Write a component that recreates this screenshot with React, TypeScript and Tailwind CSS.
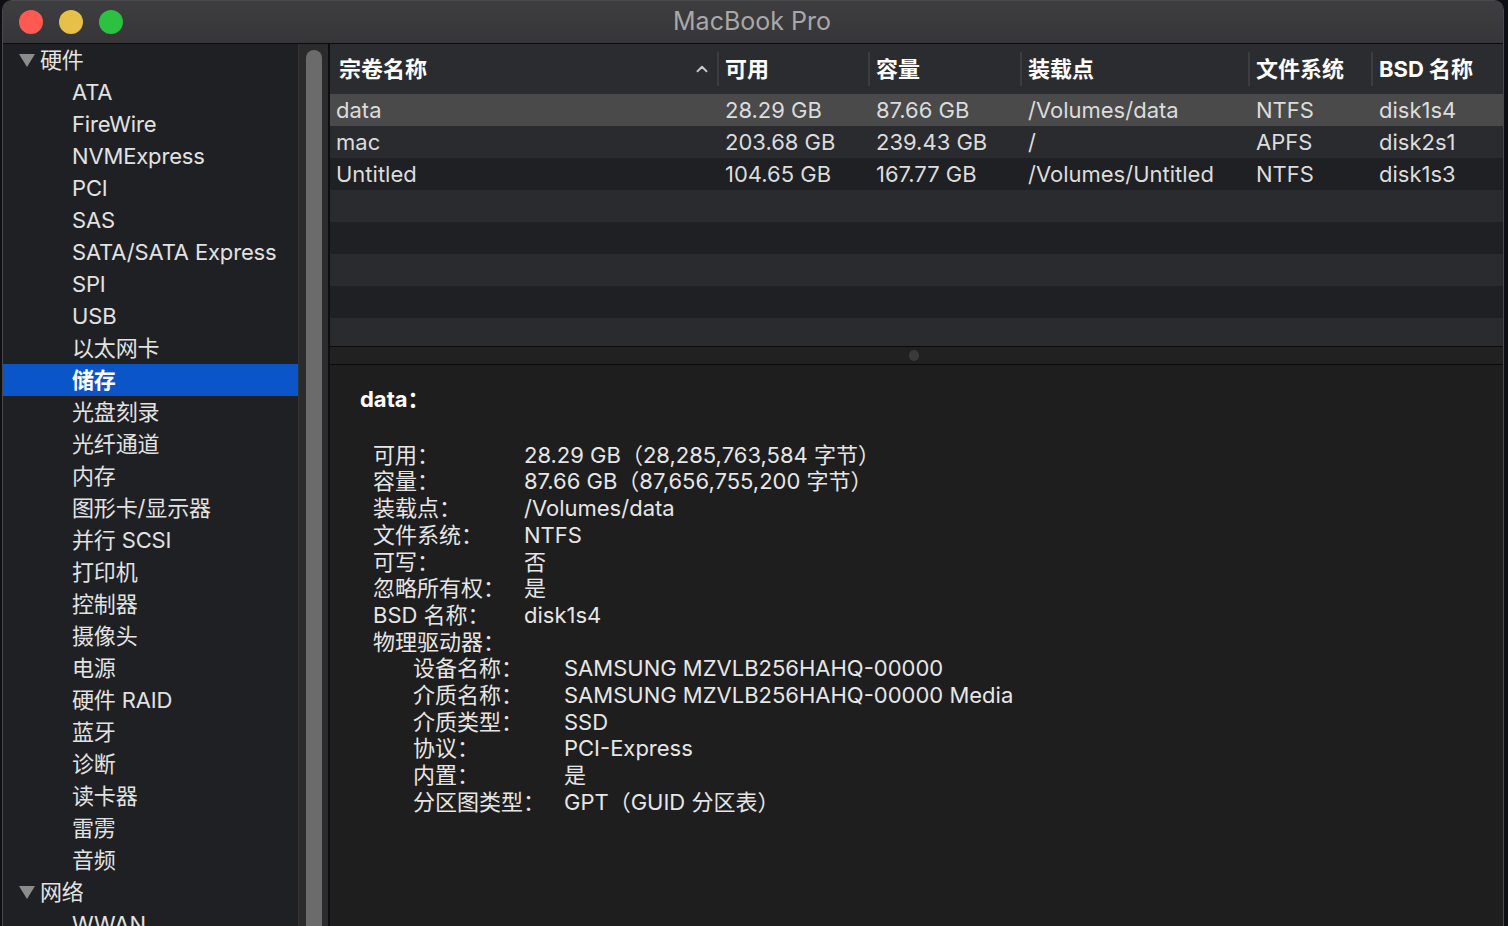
import { ChevronUp } from "lucide-react";

const hardware = [
  "ATA",
  "FireWire",
  "NVMExpress",
  "PCI",
  "SAS",
  "SATA/SATA Express",
  "SPI",
  "USB",
  "以太网卡",
  "储存",
  "光盘刻录",
  "光纤通道",
  "内存",
  "图形卡/显示器",
  "并行 SCSI",
  "打印机",
  "控制器",
  "摄像头",
  "电源",
  "硬件 RAID",
  "蓝牙",
  "诊断",
  "读卡器",
  "雷雳",
  "音频",
];

const volumes = [
  ["data", "28.29 GB", "87.66 GB", "/Volumes/data", "NTFS", "disk1s4"],
  ["mac", "203.68 GB", "239.43 GB", "/", "APFS", "disk2s1"],
  ["Untitled", "104.65 GB", "167.77 GB", "/Volumes/Untitled", "NTFS", "disk1s3"],
  ["", "", "", "", "", ""],
  ["", "", "", "", "", ""],
  ["", "", "", "", "", ""],
  ["", "", "", "", "", ""],
  ["", "", "", "", "", ""],
];

const details = [
  ["可用：", "28.29 GB（28,285,763,584 字节）"],
  ["容量：", "87.66 GB（87,656,755,200 字节）"],
  ["装载点：", "/Volumes/data"],
  ["文件系统：", "NTFS"],
  ["可写：", "否"],
  ["忽略所有权：", "是"],
  ["BSD 名称：", "disk1s4"],
];

const drive = [
  ["设备名称：", "SAMSUNG MZVLB256HAHQ-00000"],
  ["介质名称：", "SAMSUNG MZVLB256HAHQ-00000 Media"],
  ["介质类型：", "SSD"],
  ["协议：", "PCI-Express"],
  ["内置：", "是"],
  ["分区图类型：", "GPT（GUID 分区表）"],
];

const cols = "grid grid-cols-[387px_151px_152px_228px_123px_1fr]";

const Triangle = () => (
  <svg width="18" height="16" viewBox="0 0 18 16" className="mr-[4px]">
    <polygon points="1,2 17,2 9,15" fill="#8c8c8c" />
  </svg>
);

const Sidebar = () => (
  <div className="w-[295px] h-full bg-[#1f2023] overflow-hidden text-[22px] text-[#e2e2e2] tracking-[-0.15px]">
    <div className="h-[32px] flex items-center pl-[15px]">
      <Triangle />
      <span>硬件</span>
    </div>
    {hardware.map((h) => (
      <div
        key={h}
        className={
          h === "储存"
            ? "h-[32px] flex items-center pl-[69px] bg-[#0a56c8] text-white font-semibold"
            : "h-[32px] flex items-center pl-[69px]"
        }
      >
        {h}
      </div>
    ))}
    <div className="h-[32px] flex items-center pl-[15px]">
      <Triangle />
      <span>网络</span>
    </div>
    <div className="h-[32px] flex items-center pl-[69px]">WWAN</div>
  </div>
);

const VolumeTable = () => (
  <div className="h-[302px] overflow-hidden">
    <div className={`${cols} h-[50px] bg-[#2b2c2f] text-white font-bold text-[22px]`}>
      {["宗卷名称", "可用", "容量", "装载点", "文件系统", "BSD 名称"].map((c, i) => (
        <div
          key={c}
          className={
            i === 0
              ? "flex items-center justify-between pl-[9px] pr-[6px]"
              : "flex items-center pl-[6px] border-l-2 border-[#3c3d41] my-[8px]"
          }
        >
          <span>{c}</span>
          {i === 0 && <ChevronUp size={18} strokeWidth={2.5} className="text-[#c8c8c8]" />}
        </div>
      ))}
    </div>
    {volumes.map((row, r) => (
      <div
        key={r}
        className={`${cols} h-[32px] items-center text-[22px] text-[#dcdcdc] ${
          r === 0 ? "bg-[#4a4a4a]" : r % 2 === 1 ? "bg-[#2a2b2e]" : "bg-[#1f2023]"
        }`}
      >
        {row.map((cell, i) => (
          <div key={i} className={i === 0 ? "pl-[6px]" : "pl-[8px]"}>
            {cell}
          </div>
        ))}
      </div>
    ))}
  </div>
);

const Detail = () => (
  <div className="flex-1 bg-[#1e1e1e] pl-[30px] pt-[21px] text-[22px] text-[#e6e6e6] leading-[26.7px]">
    <div className="font-bold text-white">data：</div>
    <div className="mt-[29px] pl-[13px]">
      {details.map(([k, v]) => (
        <div key={k} className="grid grid-cols-[151px_1fr]">
          <span>{k}</span>
          <span>{v}</span>
        </div>
      ))}
      <div>物理驱动器：</div>
      <div className="pl-[40px]">
        {drive.map(([k, v]) => (
          <div key={k} className="grid grid-cols-[151px_1fr]">
            <span>{k}</span>
            <span>{v}</span>
          </div>
        ))}
      </div>
    </div>
  </div>
);

export default function App() {
  return (
    <div className="w-[1508px] h-[926px] bg-[#0d0f14] overflow-hidden font-['Inter','Noto_Sans_CJK_SC',sans-serif]">
      <div className="ml-[2px] w-[1502px] h-[926px] rounded-t-[10px] overflow-hidden flex flex-col border-x border-t border-[#4a4a4c] bg-[#1e1e1e]">
        <div className="h-[43px] shrink-0 bg-gradient-to-b from-[#3e3e40] to-[#363638] flex items-center relative border-b border-[#0b0b0b]">
          <div className="flex gap-[16px] pl-[16px]">
            <span className="w-[24px] h-[24px] rounded-full bg-[#fe5a52]" />
            <span className="w-[24px] h-[24px] rounded-full bg-[#e7c04a]" />
            <span className="w-[24px] h-[24px] rounded-full bg-[#2cc140]" />
          </div>
          <div className="absolute inset-0 flex items-center justify-center text-[25px] text-[#a8a8a8] pr-[2px]">
            MacBook Pro
          </div>
        </div>
        <div className="flex flex-1 min-h-0">
          <Sidebar />
          <div className="w-[32px] h-full bg-[#2b2b2d] border-l border-[#333336] border-r-2 border-r-[#0e0e0e] pl-[7px] pt-[6px]">
            <div className="w-[16px] h-[900px] rounded-full bg-[#6b6b6b]" />
          </div>
          <div className="flex-1 flex flex-col min-w-0">
            <VolumeTable />
            <div className="h-[19px] bg-[#212121] border-y border-[#0a0a0a] flex items-center justify-center pr-[6px]">
              <span className="w-[10px] h-[11px] rounded-full bg-[#3a3a3a]" />
            </div>
            <Detail />
          </div>
        </div>
      </div>
    </div>
  );
}
